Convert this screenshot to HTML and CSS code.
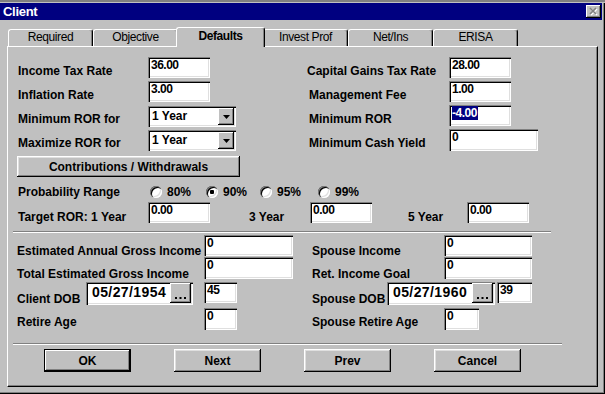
FILE: index.html
```html
<!DOCTYPE html>
<html lang="en">
<head>
    <meta charset="UTF-8">
    <meta name="viewport" content="width=device-width, initial-scale=1.0">
    <title>Client</title>
    <link rel="stylesheet" href="styles.css">
</head>
<body>

    <div class="backdrop"></div>

    <div class="window">
        <div class="titlebar">
            <span class="title">Client</span>
            <span class="close">
                <svg width="15" height="13" viewBox="0 0 15 13">
                    <path d="M5 4 L11 10 M11 4 L5 10" stroke="#fff" stroke-width="1.6"/>
                    <path d="M4 3 L10 9 M10 3 L4 9" stroke="#808080" stroke-width="1.6"/>
                </svg>
            </span>
        </div>

        <!-- Tab strip -->
        <div class="tabs">
            <div class="tab">Required</div>
            <div class="tab">Objective</div>
            <div class="tab active">Defaults</div>
            <div class="tab">Invest Prof</div>
            <div class="tab">Net/Ins</div>
            <div class="tab">ERISA</div>
        </div>

        <div class="panel">
            <!-- Rates -->
            <div class="rates">
                <label class="lbl">Income Tax Rate</label>
                <div class="edit w62">36.00</div>
                <label class="lbl">Capital Gains Tax Rate</label>
                <div class="edit w62">28.00</div>

                <label class="lbl">Inflation Rate</label>
                <div class="edit w62">3.00</div>
                <label class="lbl indent">Management Fee</label>
                <div class="edit w62">1.00</div>

                <label class="lbl">Minimum ROR for</label>
                <div class="combo">
                    <span class="combo-text">1 Year</span>
                    <span class="combo-btn"><svg width="7" height="4" viewBox="0 0 7 4"><path d="M0 0 H7 L3.5 4 Z" fill="#000"/></svg></span>
                </div>
                <label class="lbl indent">Minimum ROR</label>
                <div class="edit w62"><span class="selected">-4.00</span></div>

                <label class="lbl">Maximize ROR for</label>
                <div class="combo">
                    <span class="combo-text">1 Year</span>
                    <span class="combo-btn"><svg width="7" height="4" viewBox="0 0 7 4"><path d="M0 0 H7 L3.5 4 Z" fill="#000"/></svg></span>
                </div>
                <label class="lbl indent">Minimum Cash Yield</label>
                <div class="edit w89 tall">0</div>
            </div>

            <button class="btn contrib">Contributions / Withdrawals</button>

            <!-- Probability -->
            <div class="prob-row">
                <span class="lbl prob-label">Probability Range</span>
                <span class="option o1"><span class="radio"></span>80%</span>
                <span class="option o2"><span class="radio on"></span>90%</span>
                <span class="option o3"><span class="radio"></span>95%</span>
                <span class="option"><span class="radio"></span>99%</span>
            </div>

            <div class="target-row">
                <span class="lbl t-first">Target ROR: 1 Year</span>
                <div class="edit w62">0.00</div>
                <span class="lbl t-3">3 Year</span>
                <div class="edit w62">0.00</div>
                <span class="lbl t-5">5 Year</span>
                <div class="edit w62">0.00</div>
            </div>

            <div class="sep"></div>

            <!-- Client and spouse -->
            <div class="people">
                <div class="prow ra">
                    <div class="pleft">
                        <span class="lbl wl">Estimated Annual Gross Income</span>
                        <div class="edit w89">0</div>
                    </div>
                    <div class="pright">
                        <span class="lbl wr">Spouse Income</span>
                        <div class="edit w88">0</div>
                    </div>
                </div>
                <div class="prow rb">
                    <div class="pleft">
                        <span class="lbl wl">Total Estimated Gross Income</span>
                        <div class="edit w89 tall">0</div>
                    </div>
                    <div class="pright">
                        <span class="lbl wr">Ret. Income Goal</span>
                        <div class="edit w88 tall">0</div>
                    </div>
                </div>
                <div class="prow rc">
                    <div class="pleft">
                        <span class="lbl dob-l">Client DOB</span>
                        <div class="date">
                            <span class="date-text">05/27/1954</span>
                            <span class="date-btn"><svg width="11" height="2" viewBox="0 0 11 2"><rect x="0" width="2" height="2"/><rect x="4.5" width="2" height="2"/><rect x="9" width="2" height="2"/></svg></span>
                        </div>
                        <div class="edit w33 age-l">45</div>
                    </div>
                    <div class="pright">
                        <span class="lbl dob-r">Spouse DOB</span>
                        <div class="date wide">
                            <span class="date-text">05/27/1960</span>
                            <span class="date-btn"><svg width="11" height="2" viewBox="0 0 11 2"><rect x="0" width="2" height="2"/><rect x="4.5" width="2" height="2"/><rect x="9" width="2" height="2"/></svg></span>
                        </div>
                        <div class="edit w35 age-r">39</div>
                    </div>
                </div>
                <div class="prow rd">
                    <div class="pleft">
                        <span class="lbl wl">Retire Age</span>
                        <div class="edit w33 tall">0</div>
                    </div>
                    <div class="pright">
                        <span class="lbl wr">Spouse Retire Age</span>
                        <div class="edit w35 tall">0</div>
                    </div>
                </div>
            </div>

            <div class="sep wide-sep"></div>

            <!-- Dialog buttons -->
            <div class="buttons">
                <button class="btn default">OK</button>
                <button class="btn">Next</button>
                <button class="btn">Prev</button>
                <button class="btn">Cancel</button>
            </div>
        </div>
    </div>

</body>
</html>
```

FILE: styles.css
```css
* {
    box-sizing: border-box;
}

body {
    margin: 0;
    width: 605px;
    height: 394px;
    overflow: hidden;
    background-color: #c0c0c0;
    font-family: "Liberation Sans", Arial, sans-serif;
    font-size: 12px;
    color: #000;
}

.backdrop {
    height: 2px;
    background-color: #808080;
}

.window {
    width: 605px;
    height: 391px;
    box-shadow: inset -1px -1px #000, inset -2px -2px #808080;
}

/* Title bar */
.titlebar {
    display: flex;
    justify-content: space-between;
    align-items: center;
    width: 602px;
    height: 17px;
    margin-top: 1px;
    background-color: #000080;
    padding-left: 3px;
}

.title {
    color: #fff;
    font-weight: bold;
    font-size: 13px;
    letter-spacing: -0.3px;
    line-height: 17px;
}

.close {
    display: flex;
    width: 15px;
    height: 13px;
    margin-right: 1px;
    background-color: #c0c0c0;
    box-shadow: inset -1px -1px #000, inset 1px 1px #fff, inset -2px -2px #808080;
}

/* Tabs */
.tabs {
    display: flex;
    height: 19px;
    margin-top: 7px;
    margin-left: 8px;
    position: relative;
    z-index: 1;
}

.tab {
    width: 85px;
    height: 17px;
    margin-top: 2px;
    border: 1px solid #fff;
    border-right-color: #000;
    border-bottom: none;
    border-radius: 3px 3px 0 0;
    box-shadow: inset -1px 0 #808080;
    text-align: center;
    line-height: 15px;
    letter-spacing: -0.4px;
    background-color: #c0c0c0;
}

.tab.active {
    position: relative;
    z-index: 2;
    width: 89px;
    height: 20px;
    margin: 0 -2px;
    padding-top: 1px;
    font-weight: bold;
}

.panel {
    width: 591px;
    height: 341px;
    margin-left: 7px;
    border: 1px solid #000;
    border-top-color: #fff;
    border-left-color: #fff;
    box-shadow: inset -1px -1px #808080;
}

/* Labels and controls */
.lbl {
    display: block;
    font-weight: bold;
    line-height: 14px;
    padding-top: 7px;
    white-space: nowrap;
}

.edit {
    height: 21px;
    background-color: #fff;
    box-shadow: inset 1px 1px #808080, inset 2px 2px #000, inset -1px -1px #fff, inset -2px -2px #dfdfdf;
    padding: 3px 2px 0 3px;
    font-weight: bold;
    font-size: 12px;
    line-height: 10px;
    letter-spacing: -0.5px;
    white-space: nowrap;
}

.edit.tall {
    height: 22px;
}

.w33 { width: 33px; }
.w35 { width: 35px; }
.w62 { width: 62px; }
.w88 { width: 88px; }
.w89 { width: 89px; }

.selected {
    background-color: #000080;
    color: #fff;
    padding: 0 1px 0 0;
}

.combo {
    display: flex;
    width: 88px;
    height: 21px;
    margin-top: 1px;
    padding: 2px;
    background-color: #fff;
    box-shadow: inset 1px 1px #808080, inset 2px 2px #000, inset -1px -1px #fff, inset -2px -2px #dfdfdf;
}

.combo-text {
    flex: 1;
    padding-left: 2px;
    font-weight: bold;
    line-height: 17px;
}

.combo-btn {
    display: flex;
    align-items: center;
    justify-content: center;
    width: 16px;
    height: 17px;
    background-color: #c0c0c0;
    box-shadow: inset -1px -1px #000, inset 1px 1px #fff, inset -2px -2px #808080;
}

.btn {
    display: block;
    margin: 0;
    padding: 0;
    border: none;
    background-color: #c0c0c0;
    box-shadow: inset -1px -1px #000, inset 1px 1px #fff, inset -2px -2px #808080, inset 2px 2px #dfdfdf;
    font-family: "Liberation Sans", Arial, sans-serif;
    font-weight: bold;
    font-size: 12px;
    color: #000;
}

/* Rates grid */
.rates {
    display: grid;
    grid-template-columns: 130px 159px 142px 1fr;
    grid-auto-rows: 24px;
    margin: 10px 0 0 10px;
}

.indent {
    padding-left: 2px;
}

.contrib {
    width: 223px;
    height: 21px;
    margin: 3px 0 0 9px;
}

/* Probability */
.prob-row {
    display: flex;
    align-items: center;
    height: 16px;
    margin: 7px 0 0 10px;
    font-weight: bold;
}

.prob-label {
    width: 132px;
    padding-top: 0;
    padding-bottom: 1px;
}

.option {
    display: flex;
    align-items: center;
}

.o1 { width: 56px; }
.o2 { width: 54px; }
.o3 { width: 58px; }

.radio {
    position: relative;
    width: 12px;
    height: 12px;
    margin-right: 5px;
    border-radius: 50%;
    background-color: #fff;
    box-shadow: inset 1px 1px #808080, inset 2px 2px #000, inset -1px -1px #fff, inset -2px -2px #dfdfdf;
}

.radio.on::after {
    content: "";
    position: absolute;
    left: 4px;
    top: 4px;
    width: 4px;
    height: 4px;
    border-radius: 1px;
    background-color: #000;
}

/* Target ROR */
.target-row {
    display: flex;
    height: 21px;
    margin: 2px 0 0 10px;
}

.target-row .lbl {
    padding-top: 8px;
}

.t-first { width: 130px; }
.t-3 { width: 61px; margin-left: 39px; }
.t-5 { width: 59px; margin-left: 36px; }

.sep {
    width: 538px;
    height: 2px;
    margin: 8px 0 0 5px;
    border-top: 1px solid #808080;
    border-bottom: 1px solid #fff;
}

.wide-sep {
    width: 549px;
    margin-top: 13px;
}

/* Client and spouse */
.people {
    margin: 2px 0 0 9px;
}

.prow {
    display: flex;
}

.ra { height: 22px; }
.rb { height: 25px; }
.rc { height: 26px; }
.rd { height: 22px; }

.ra .lbl { padding-top: 9px; }
.rb .lbl,
.rc .lbl { padding-top: 10px; }

.pleft {
    display: flex;
    width: 295px;
}

.pright {
    display: flex;
}

.wl { width: 187px; }
.wr { width: 132px; }
.dob-l { width: 69px; }
.dob-r { width: 75px; }

.date {
    display: flex;
    width: 107px;
    height: 23px;
    padding: 1px 2px 2px 2px;
    background-color: #fff;
    box-shadow: inset 1px 1px #808080, inset 2px 2px #000, inset -1px -1px #fff, inset -2px -2px #dfdfdf;
}

.date.wide {
    width: 108px;
}

.date-text {
    flex: 1;
    padding: 1px 0 0 4px;
    font-weight: bold;
    font-size: 14px;
    line-height: 17px;
    letter-spacing: 0.4px;
}

.date-btn {
    display: flex;
    align-items: flex-end;
    justify-content: center;
    width: 21px;
    padding-bottom: 4px;
    background-color: #c0c0c0;
    box-shadow: inset -1px -1px #000, inset 1px 1px #fff, inset -2px -2px #808080;
}

.age-l { margin-left: 11px; }
.age-r { margin-left: 2px; }

/* Dialog buttons */
.buttons {
    display: flex;
    gap: 43px;
    margin: 4px 0 0 36px;
}

.buttons .btn {
    width: 87px;
    height: 23px;
}

.buttons .btn.default {
    box-shadow: inset 0 0 0 1px #000, inset -2px -2px #000, inset 2px 2px #fff, inset -3px -3px #808080;
}
```
